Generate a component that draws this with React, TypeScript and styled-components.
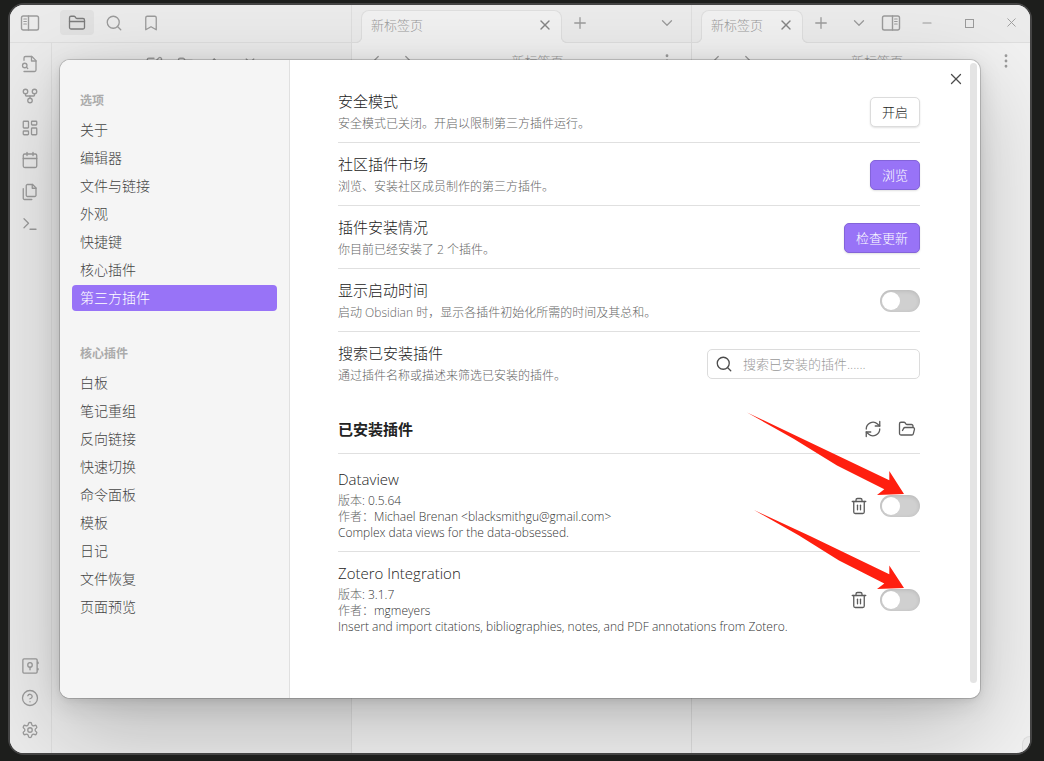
import React from 'react';
import styled, { createGlobalStyle, css } from 'styled-components';
import {
  ArrowUpNarrowWide,
  Bookmark,
  Calendar,
  ChevronDown,
  ChevronLeft,
  ChevronRight,
  ChevronsDownUp,
  CircleHelp,
  EllipsisVertical,
  FolderClosed,
  FolderOpen,
  FolderPlus,
  GitFork,
  LayoutDashboard,
  Minus,
  Plus,
  Search,
  SquarePen,
  Terminal,
  Trash2,
  X,
} from 'lucide-react';

const color = {
  desktop: '#1d1e1c',
  frame: '#444444',
  chrome: '#f6f6f6',
  page: '#ffffff',
  line: '#e0e0e0',
  icon: '#707070',
  text: '#222222',
  muted: '#666666',
  faint: '#ababab',
  accent: '#9873f7',
  accentEdge: '#8364d9',
  arrow: '#ff1f0f',
};

const GlobalStyle = createGlobalStyle`
  *, *::before, *::after { box-sizing: border-box; }
  body {
    margin: 0;
    background: ${color.desktop};
    color: ${color.text};
    font-family: "Open Sans", "Noto Sans CJK SC", sans-serif;
    font-weight: 300;
    font-size: 13px;
  }
  button, input { font: inherit; color: inherit; }
  h2, h3, p, ul { margin: 0; padding: 0; font-weight: inherit; }
  ul { list-style: none; }
  svg { display: block; flex: none; }
`;

/* ---------- window frame ---------- */

const Desktop = styled.div`
  display: flex;
  min-height: 100vh;
  padding: 3px 12px 6px 8px;
`;

const AppWindow = styled.div`
  position: relative;
  flex: 1;
  display: flex;
  flex-direction: column;
  overflow: hidden;
  border: 2px solid ${color.frame};
  border-radius: 16px;
  background: ${color.page};
`;

const columns = css`
  display: grid;
  grid-template-columns: 342px 340fr 338fr;
`;

const TitleBar = styled.header`
  ${columns}
  height: 38px;
  background: ${color.chrome};
`;

const BarCell = styled.div<{ $last?: boolean }>`
  display: flex;
  align-items: center;
  min-width: 0;
  padding-bottom: 2px;
  color: ${color.icon};
  border-bottom: 1px solid ${color.line};
  border-right: ${(p) => (p.$last ? '0' : `1px solid ${color.line}`)};
`;

const IconButton = styled.button<{ $w?: number; $active?: boolean; $push?: boolean }>`
  display: flex;
  align-items: center;
  justify-content: center;
  width: ${(p) => p.$w ?? 34}px;
  height: 25px;
  padding: 0;
  border: 0;
  border-radius: 4px;
  background: ${(p) => (p.$active ? '#e4e4e4' : 'transparent')};
  color: ${(p) => (p.$active ? '#3c3c3c' : color.icon)};
  margin-left: ${(p) => (p.$push ? 'auto' : '0')};
`;

const LeftTools = styled(BarCell)`
  gap: 3px;
  padding-left: 3px;

  & > :nth-child(2) { margin-left: 10px; }
`;

const TabCell = styled(BarCell)`
  padding-left: 9px;
`;

const Tab = styled.div<{ $grow?: boolean }>`
  position: relative;
  align-self: flex-end;
  display: flex;
  align-items: center;
  justify-content: space-between;
  width: ${(p) => (p.$grow ? '61%' : '30%')};
  min-width: 102px;
  height: 33px;
  margin-bottom: -3px;
  padding: 0 8px 4px 9px;
  border: 1px solid ${color.line};
  border-bottom: 0;
  border-radius: 8px 8px 0 0;
  background: ${color.page};
  line-height: 16px;
  white-space: nowrap;

  &::before, &::after {
    content: '';
    position: absolute;
    bottom: 0;
    width: 6px;
    height: 6px;
    border-bottom: 1px solid ${color.line};
  }
  &::before {
    left: -6px;
    border-right: 1px solid ${color.line};
    border-bottom-right-radius: 6px;
    box-shadow: 2px 2px 0 ${color.page};
  }
  &::after {
    right: -6px;
    border-left: 1px solid ${color.line};
    border-bottom-left-radius: 6px;
    box-shadow: -2px 2px 0 ${color.page};
  }
`;

const TabClose = styled.button`
  display: flex;
  padding: 0;
  border: 0;
  background: transparent;
  color: #4c4c4c;
`;

const Workspace = styled.div`
  ${columns}
  flex: 1;
`;

const LeftDock = styled.div`
  display: flex;
  border-right: 1px solid ${color.line};
  background: ${color.chrome};
`;

const Ribbon = styled.nav`
  display: flex;
  flex-direction: column;
  gap: 7px;
  width: 42px;
  padding: 8px 0 11px 3px;
  border-right: 1px solid ${color.line};
`;

const RibbonSpacer = styled.div`
  flex: 1;
`;

const FileTools = styled.div`
  display: flex;
  flex: 1;
  justify-content: center;
  padding-top: 9px;
`;

const Pane = styled.section<{ $last?: boolean }>`
  border-right: ${(p) => (p.$last ? '0' : `1px solid ${color.line}`)};
`;

const PaneHeader = styled.div`
  display: flex;
  align-items: center;
  height: 36px;
  padding: 0 8px;
  color: ${color.icon};
`;

const PaneTitle = styled.span`
  flex: 1;
  text-align: center;
  line-height: 16px;
`;

const StatusBar = styled.footer`
  position: absolute;
  right: 0;
  bottom: 0;
  width: 8px;
  height: 17px;
  border: 1px solid ${color.line};
  border-width: 1px 0 0 1px;
  border-top-left-radius: 8px;
  background: ${color.chrome};
`;

/* ---------- settings dialog ---------- */

const Dim = styled.div`
  position: absolute;
  inset: 0;
  display: flex;
  padding: 55px 50px;
  background: rgba(220, 220, 220, 0.4);
`;

const Dialog = styled.div`
  position: relative;
  flex: 1;
  display: flex;
  min-width: 0;
  overflow: hidden;
  border-radius: 10px;
  background: ${color.page};
`;

const DialogShadow = styled.div`
  flex: 1;
  display: flex;
  min-width: 0;
  border-radius: 10px;
  box-shadow: 0 0 0 1px rgba(0, 0, 0, 0.16), 0 2px 7px rgba(0, 0, 0, 0.07),
    0 6px 25px rgba(0, 0, 0, 0.11), 0 30px 90px rgba(0, 0, 0, 0.22);
`;

const Sidebar = styled.nav`
  display: flex;
  flex-direction: column;
  gap: 33px;
  flex: none;
  width: 230px;
  padding: 31px 12px;
  border-right: 1px solid ${color.line};
  background: #f5f5f5;
`;

const GroupTitle = styled.h2`
  padding: 0 8px;
  margin-bottom: 6px;
  font-size: 12px;
  line-height: 20px;
  font-weight: 600;
  color: ${color.faint};
`;

const NavList = styled.ul`
  display: flex;
  flex-direction: column;
  gap: 2px;
`;

const NavItem = styled.button<{ $active?: boolean }>`
  display: block;
  width: 100%;
  height: 26px;
  padding: 0 8px;
  border: 0;
  border-radius: 4px;
  text-align: left;
  font-size: 14px;
  line-height: 26px;
  background: ${(p) => (p.$active ? color.accent : 'transparent')};
  color: ${(p) => (p.$active ? '#ffffff' : '#444444')};
`;

const Content = styled.main`
  flex: 1;
  min-width: 0;
  padding: 20px 60px 48px 48px;
`;

const CloseButton = styled.button`
  position: absolute;
  top: 10px;
  right: 15px;
  display: flex;
  padding: 0;
  border: 0;
  background: transparent;
  color: #4c4c4c;
`;

const ScrollThumb = styled.div`
  position: absolute;
  top: 3px;
  right: 3px;
  bottom: 15px;
  width: 7px;
  border-radius: 4px;
  background: #e4e4e4;
`;

const Setting = styled.div`
  display: flex;
  align-items: center;
  justify-content: space-between;
  padding: 12px 0 10px;

  & + & { border-top: 1px solid ${color.line}; }
`;

const Name = styled.h3`
  font-size: 15px;
  line-height: 18px;
`;

const Description = styled.p`
  margin-top: 6px;
  font-size: 12px;
  line-height: 16px;
  color: ${color.muted};
`;

const PluginMeta = styled.div`
  margin-top: 5px;
  font-size: 12px;
  line-height: 16px;
  color: #333333;
`;

const MetaLabel = styled.span`
  color: ${color.muted};
`;

const Controls = styled.div<{ $gap: number }>`
  display: flex;
  align-items: center;
  gap: ${(p) => p.$gap}px;
`;

const Button = styled.button<{ $cta?: boolean }>`
  height: 30px;
  padding: 0 11px 2px;
  border: 1px solid ${(p) => (p.$cta ? color.accentEdge : '#dcdcdc')};
  border-radius: 5px;
  background: ${(p) => (p.$cta ? color.accent : color.page)};
  color: ${(p) => (p.$cta ? '#ffffff' : color.text)};
  box-shadow: 0 1px 2px rgba(0, 0, 0, 0.12);
  font-size: 13px;
`;

const Toggle = styled.input`
  appearance: none;
  display: flex;
  align-items: center;
  width: 40px;
  height: 22px;
  margin: 0;
  padding: 2px;
  border-radius: 11px;
  background: #d0d0d0;
  box-shadow: inset 0 1px 4px rgba(0, 0, 0, 0.12);

  &::before {
    content: '';
    width: 18px;
    height: 18px;
    border-radius: 50%;
    background: #ffffff;
  }
  &:checked { justify-content: flex-end; background: ${color.accent}; }
`;

const SearchBox = styled.label`
  display: flex;
  align-items: center;
  gap: 10px;
  width: 213px;
  height: 30px;
  padding: 0 8px 0 7px;
  border: 1px solid #dcdcdc;
  border-radius: 5px;
  color: #4c4c4c;
`;

const SearchInput = styled.input`
  flex: 1;
  min-width: 0;
  padding: 0;
  border: 0;
  outline: 0;
  background: transparent;
  font-size: 13px;

  &::placeholder { color: #999999; opacity: 1; }
`;

const SectionHeading = styled.div`
  display: flex;
  align-items: center;
  justify-content: space-between;
  padding: 25px 0 14px;
  border-bottom: 1px solid ${color.line};
  margin-bottom: 4px;
`;

const SectionTitle = styled.h2`
  font-size: 15px;
  line-height: 18px;
  font-weight: 600;
`;

const GlyphButton = styled.button`
  display: flex;
  align-items: center;
  justify-content: center;
  width: 26px;
  height: 20px;
  padding: 0;
  border: 0;
  background: transparent;
  color: #5c5c5c;
`;

const ToggleAnchor = styled.div`
  position: relative;
`;

const Pointer = styled.svg`
  position: absolute;
  right: 16px;
  bottom: 100%;
  pointer-events: none;
`;

/* ---------- drawings ---------- */

const Glyph = ({ size = 18, children }: { size?: number; children: React.ReactNode }) => (
  <svg width={size} height={size} viewBox="0 0 24 24" fill="none" stroke="currentColor"
    strokeWidth="1.75" strokeLinecap="round" strokeLinejoin="round" aria-hidden="true">
    {children}
  </svg>
);

const SidebarIcon = ({ flip }: { flip?: boolean }) => (
  <svg width="20" height="18" viewBox="0 0 20 18" fill="none" stroke="currentColor"
    strokeWidth="1.4" strokeLinecap="round" aria-hidden="true">
    <g transform={flip ? 'matrix(-1 0 0 1 20 0)' : undefined}>
      <rect x="1.5" y="2" width="17" height="14" rx="1.8" />
      <path d="M8.5 2v14" />
      <path d="M3.8 5h2.6M3.8 7.5h2.6M3.8 10h2.6" strokeWidth="1.1" />
    </g>
  </svg>
);

const MaximizeIcon = () => (
  <svg width="10" height="10" viewBox="0 0 10 10" fill="none" stroke="currentColor" aria-hidden="true">
    <rect x="1.5" y="1.5" width="8" height="8" />
  </svg>
);

const FileSearchIcon = () => (
  <Glyph>
    <path d="M4 22h14a2 2 0 0 0 2-2V7.5L14.5 2H6a2 2 0 0 0-2 2v3" />
    <path d="M14 2v6h6" />
    <circle cx="5" cy="14" r="3" />
    <path d="m9 18-1.5-1.5" />
  </Glyph>
);

const FilesIcon = () => (
  <Glyph>
    <path d="M15.5 2H8.6c-.4 0-.8.2-1.1.5-.3.3-.5.7-.5 1.1v12.8c0 .4.2.8.5 1.1.3.3.7.5 1.1.5h9.8c.4 0 .8-.2 1.1-.5.3-.3.5-.7.5-1.1V6.5L15.5 2z" />
    <path d="M3 7.6v12.8c0 .4.2.8.5 1.1.3.3.7.5 1.1.5h9.8" />
    <path d="M15 2v5h5" />
  </Glyph>
);

const VaultIcon = () => (
  <Glyph>
    <rect x="2.5" y="2.5" width="19" height="19" rx="1.5" />
    <circle cx="12" cy="10.5" r="3" />
    <path d="M12 13.5v3.5" />
    <path d="M22.6 7v1.5M22.6 15.5V17" strokeWidth="2" />
  </Glyph>
);

const GearIcon = () => (
  <Glyph>
    <path d="M12.22 2h-.44a2 2 0 0 0-2 2v.18a2 2 0 0 1-1 1.73l-.43.25a2 2 0 0 1-2 0l-.15-.08a2 2 0 0 0-2.73.73l-.22.38a2 2 0 0 0 .73 2.73l.15.1a2 2 0 0 1 1 1.72v.51a2 2 0 0 1-1 1.74l-.15.09a2 2 0 0 0-.73 2.73l.22.38a2 2 0 0 0 2.73.73l.15-.08a2 2 0 0 1 2 0l.43.25a2 2 0 0 1 1 1.73V20a2 2 0 0 0 2 2h.44a2 2 0 0 0 2-2v-.18a2 2 0 0 1 1-1.73l.43-.25a2 2 0 0 1 2 0l.15.08a2 2 0 0 0 2.73-.73l.22-.39a2 2 0 0 0-.73-2.73l-.15-.08a2 2 0 0 1-1-1.74v-.5a2 2 0 0 1 1-1.74l.15-.09a2 2 0 0 0 .73-2.73l-.22-.38a2 2 0 0 0-2.73-.73l-.15.08a2 2 0 0 1-2 0l-.43-.25a2 2 0 0 1-1-1.73V4a2 2 0 0 0-2-2z" />
    <circle cx="12" cy="12" r="3" />
  </Glyph>
);

const RefreshIcon = () => (
  <Glyph>
    <path d="M21 2v6h-6" />
    <path d="M3 12a9 9 0 0 1 15-6.7L21 8" />
    <path d="M3 22v-6h6" />
    <path d="M21 12a9 9 0 0 1-15 6.7L3 16" />
  </Glyph>
);

const LongPointer = () => (
  <Pointer width="158" height="84" viewBox="0 0 158 84" aria-hidden="true">
    <path fill={color.arrow} d="M1 1.500L60 29.500L143.300 69.300V60L158 83L131 84L138.300 78.300L91 54.500L48 28Z" />
  </Pointer>
);

const ShortPointer = () => (
  <Pointer width="150" height="80" viewBox="0 0 150 80" aria-hidden="true">
    <path fill={color.arrow} d="M0 1L56 27L135.300 65.300V56.500L150 79L123 80L130.300 74.500L85 51.500L45 26.500Z" />
  </Pointer>
);

/* ---------- data ---------- */

const optionItems = ['关于', '编辑器', '文件与链接', '外观', '快捷键', '核心插件', '第三方插件'];
const coreItems = ['白板', '笔记重组', '反向链接', '快速切换', '命令面板', '模板', '日记', '文件恢复', '页面预览'];

const plugins = [
  {
    name: 'Dataview',
    version: '0.5.64',
    author: 'Michael Brenan <blacksmithgu@gmail.com>',
    about: 'Complex data views for the data-obsessed.',
    pointer: <LongPointer />,
  },
  {
    name: 'Zotero Integration',
    version: '3.1.7',
    author: 'mgmeyers',
    about: 'Insert and import citations, bibliographies, notes, and PDF annotations from Zotero.',
    pointer: <ShortPointer />,
  },
];

const line = { size: 18, strokeWidth: 1.75 };

const NavGroup = ({ title, items, active }: { title: string; items: string[]; active?: string }) => (
  <div>
    <GroupTitle>{title}</GroupTitle>
    <NavList>
      {items.map((item) => (
        <li key={item}>
          <NavItem type="button" $active={item === active}>{item}</NavItem>
        </li>
      ))}
    </NavList>
  </div>
);

const SettingRow = ({ name, text, children }: { name: string; text: string; children: React.ReactNode }) => (
  <Setting>
    <div>
      <Name>{name}</Name>
      <Description>{text}</Description>
    </div>
    {children}
  </Setting>
);

const PaneTop = ({ last }: { last?: boolean }) => (
  <Pane $last={last}>
    <PaneHeader>
      <IconButton type="button" $w={32} aria-label="后退"><ChevronLeft {...line} /></IconButton>
      <IconButton type="button" $w={32} aria-label="前进"><ChevronRight {...line} /></IconButton>
      <PaneTitle>新标签页</PaneTitle>
      <IconButton type="button" $w={32} aria-label="更多"><EllipsisVertical {...line} /></IconButton>
    </PaneHeader>
  </Pane>
);

export default function App() {
  return (
    <>
      <GlobalStyle />
      <Desktop>
        <AppWindow>
          <TitleBar>
            <LeftTools>
              <IconButton type="button" aria-label="侧边栏"><SidebarIcon /></IconButton>
              <IconButton type="button" $active aria-label="文件"><FolderClosed {...line} /></IconButton>
              <IconButton type="button" aria-label="搜索"><Search {...line} /></IconButton>
              <IconButton type="button" aria-label="书签"><Bookmark {...line} /></IconButton>
            </LeftTools>
            <TabCell>
              <Tab $grow>
                新标签页
                <TabClose type="button" aria-label="关闭标签页"><X size={16} strokeWidth={2} /></TabClose>
              </Tab>
              <IconButton type="button" $w={36} aria-label="新建标签页"><Plus {...line} /></IconButton>
              <IconButton type="button" $w={48} $push aria-label="标签页列表"><ChevronDown {...line} /></IconButton>
            </TabCell>
            <TabCell $last>
              <Tab>
                新标签页
                <TabClose type="button" aria-label="关闭标签页"><X size={16} strokeWidth={2} /></TabClose>
              </Tab>
              <IconButton type="button" $w={36} aria-label="新建标签页"><Plus {...line} /></IconButton>
              <IconButton type="button" $w={30} $push aria-label="标签页列表"><ChevronDown {...line} /></IconButton>
              <IconButton type="button" aria-label="右侧边栏"><SidebarIcon flip /></IconButton>
              <IconButton type="button" $w={38} aria-label="最小化"><Minus size={14} strokeWidth={1.75} /></IconButton>
              <IconButton type="button" $w={46} aria-label="最大化"><MaximizeIcon /></IconButton>
              <IconButton type="button" $w={38} aria-label="关闭"><X size={15} strokeWidth={1.5} /></IconButton>
            </TabCell>
          </TitleBar>
          <Workspace>
            <LeftDock>
              <Ribbon>
                <IconButton type="button" aria-label="快速切换"><FileSearchIcon /></IconButton>
                <IconButton type="button" aria-label="关系图谱"><GitFork {...line} /></IconButton>
                <IconButton type="button" aria-label="白板"><LayoutDashboard {...line} /></IconButton>
                <IconButton type="button" aria-label="日记"><Calendar {...line} /></IconButton>
                <IconButton type="button" aria-label="模板"><FilesIcon /></IconButton>
                <IconButton type="button" aria-label="命令面板"><Terminal {...line} /></IconButton>
                <RibbonSpacer />
                <IconButton type="button" aria-label="仓库"><VaultIcon /></IconButton>
                <IconButton type="button" aria-label="帮助"><CircleHelp {...line} /></IconButton>
                <IconButton type="button" aria-label="设置"><GearIcon /></IconButton>
              </Ribbon>
              <FileTools>
                <IconButton type="button" $w={32} aria-label="新建笔记"><SquarePen {...line} /></IconButton>
                <IconButton type="button" $w={32} aria-label="新建文件夹"><FolderPlus {...line} /></IconButton>
                <IconButton type="button" $w={32} aria-label="排序"><ArrowUpNarrowWide {...line} /></IconButton>
                <IconButton type="button" $w={32} aria-label="折叠"><ChevronsDownUp {...line} /></IconButton>
              </FileTools>
            </LeftDock>
            <PaneTop />
            <PaneTop last />
          </Workspace>
          <StatusBar />

          <Dim>
            <DialogShadow>
              <Dialog role="dialog" aria-label="设置">
                <Sidebar>
                  <NavGroup title="选项" items={optionItems} active="第三方插件" />
                  <NavGroup title="核心插件" items={coreItems} />
                </Sidebar>
                <Content>
                  <SettingRow name="安全模式" text="安全模式已关闭。开启以限制第三方插件运行。">
                    <Button type="button">开启</Button>
                  </SettingRow>
                  <SettingRow name="社区插件市场" text="浏览、安装社区成员制作的第三方插件。">
                    <Button type="button" $cta>浏览</Button>
                  </SettingRow>
                  <SettingRow name="插件安装情况" text="你目前已经安装了 2 个插件。">
                    <Button type="button" $cta>检查更新</Button>
                  </SettingRow>
                  <SettingRow name="显示启动时间" text="启动 Obsidian 时，显示各插件初始化所需的时间及其总和。">
                    <Toggle type="checkbox" aria-label="显示启动时间" />
                  </SettingRow>
                  <SettingRow name="搜索已安装插件" text="通过插件名称或描述来筛选已安装的插件。">
                    <SearchBox>
                      <Search {...line} aria-hidden="true" />
                      <SearchInput type="text" aria-label="搜索已安装插件" placeholder="搜索已安装的插件......" />
                    </SearchBox>
                  </SettingRow>

                  <SectionHeading>
                    <SectionTitle>已安装插件</SectionTitle>
                    <Controls $gap={8}>
                      <GlyphButton type="button" aria-label="重新加载插件"><RefreshIcon /></GlyphButton>
                      <GlyphButton type="button" aria-label="打开插件文件夹"><FolderOpen {...line} /></GlyphButton>
                    </Controls>
                  </SectionHeading>

                  {plugins.map((plugin) => (
                    <Setting key={plugin.name}>
                      <div>
                        <Name>{plugin.name}</Name>
                        <PluginMeta>
                          <p><MetaLabel>版本</MetaLabel>: {plugin.version}</p>
                          <p><MetaLabel>作者：</MetaLabel>{plugin.author}</p>
                          <p>{plugin.about}</p>
                        </PluginMeta>
                      </div>
                      <Controls $gap={8}>
                        <GlyphButton type="button" aria-label={`卸载 ${plugin.name}`}><Trash2 {...line} /></GlyphButton>
                        <ToggleAnchor>
                          <Toggle type="checkbox" aria-label={`启用 ${plugin.name}`} />
                          {plugin.pointer}
                        </ToggleAnchor>
                      </Controls>
                    </Setting>
                  ))}
                </Content>
                <CloseButton type="button" aria-label="关闭设置"><X size={18} strokeWidth={1.75} /></CloseButton>
                <ScrollThumb />
              </Dialog>
            </DialogShadow>
          </Dim>
        </AppWindow>
      </Desktop>
    </>
  );
}
